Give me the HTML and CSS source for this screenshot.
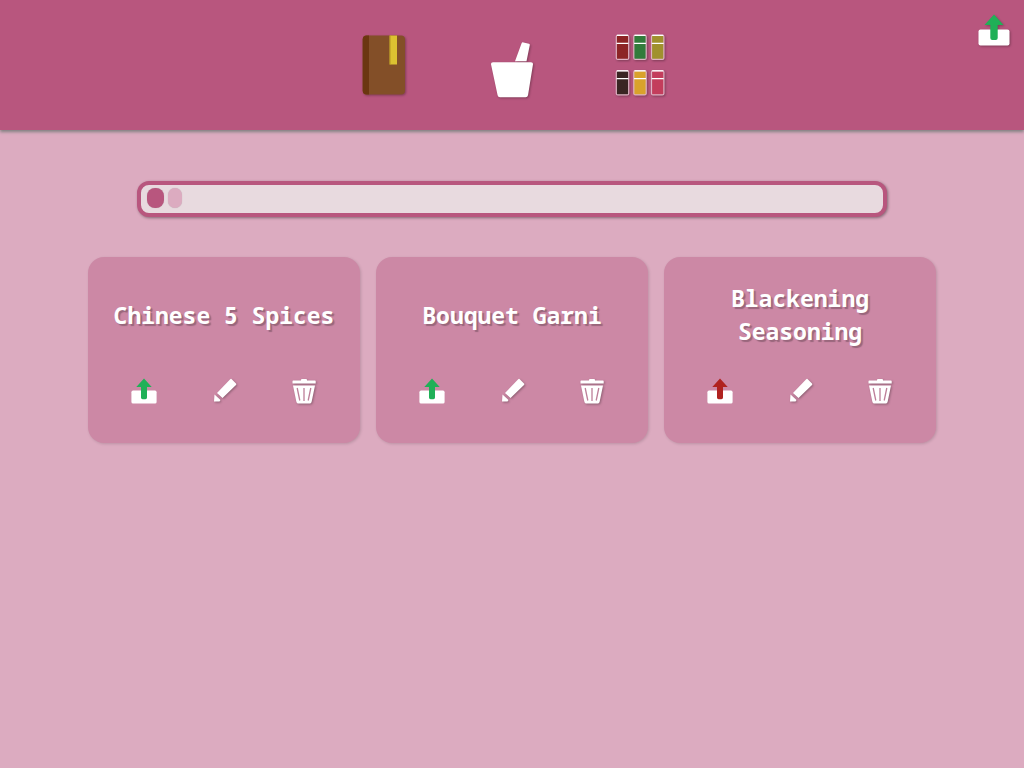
FILE: index.html
```html
<!DOCTYPE html>
<html lang="en">
<head>
<meta charset="utf-8">
<meta name="viewport" content="width=device-width, initial-scale=1">
<title>Spice Blends</title>
<link rel="stylesheet" href="styles.css">
</head>
<body>
<svg class="sprite" aria-hidden="true">
  <symbol id="tray" viewBox="0 0 32 32">
    <rect x="0.500" y="15.500" width="31" height="16" rx="2" fill="#fff"/>
    <path d="M16 0.500 25.500 11H19.700V24q0 2-2 2H14.300q-2 0-2-2V11H6.500Z" fill="currentColor"/>
  </symbol>
  <symbol id="pencil" viewBox="0 0 26 26">
    <path d="M20.500 1 25 5.500q.7.700 0 1.400L11.500 20 6 15 19.200 1.300q.6-.7 1.300-.3ZM3.500 16.500 9.500 22 8.500 23.500H3Z" fill="#fff"/>
  </symbol>
  <symbol id="trash" viewBox="0 0 26 26">
    <path d="M10 2.500V2q0-1 1-1h4q1 0 1 1v.500h8q.7 0 .7.700V5.500H1.500V3.200q0-.7.700-.7Z" fill="#fff"/>
    <path d="M2 7.500h22l-3.300 16Q20.300 25.500 19 25.500H7q-1.300 0-1.700-2Z" fill="#fff"/>
    <path d="M6.200 10 8.800 22.500M13 10v13M19.800 10l-2.600 12.500" stroke="#bd7f99" stroke-width="1.300" fill="none"/>
  </symbol>
</svg>
<header class="topbar">
  <nav class="nav" aria-label="Main">
    <a class="nav-link" href="#recipes" aria-label="Recipes">
      <svg class="nav-icon" viewBox="0 0 64 64">
        <rect x="10.700" y="3.500" width="42.300" height="59" rx="4" fill="#834f28"/>
        <path d="M17 3.500v59h-2.300q-4 0-4-4V7.500q0-4 4-4Z" fill="#6b3610"/>
        <rect x="37.600" y="3.500" width="7.400" height="29" fill="#dcc131"/>
        <path d="M38 3.500v29" stroke="#b39325"/>
      </svg>
    </a>
    <a class="nav-link" href="#mix" aria-label="Mix">
      <svg class="nav-icon" viewBox="0 0 64 64">
        <path d="M35 29.300 41.500 11.500Q42 10 43.500 10.400L49 11.700q1 .3.800 1.300L46.500 29.300Z" fill="#fff"/>
        <path d="M13 30.300h38q2.200 0 2 2L48 63.300q-.4 2-2.400 2H20q-2 0-2.400-2L11 32.300q-.2-2 2-2Z" fill="#fff"/>
      </svg>
    </a>
    <a class="nav-link" href="#spices" aria-label="Spices">
      <svg class="nav-icon" viewBox="0 0 64 64" stroke="#dfb3c4" stroke-width="1.200">
        <rect x="8.300" y="3.200" width="12.400" height="24.200" rx="1.500" fill="#8c2425"/>
        <rect x="25.800" y="3.200" width="12.400" height="24.200" rx="1.500" fill="#327b3b"/>
        <rect x="43.500" y="3.200" width="12.400" height="24.200" rx="1.500" fill="#a0912e"/>
        <rect x="8.300" y="38.700" width="12.400" height="24.200" rx="1.500" fill="#3a2523"/>
        <rect x="25.800" y="38.700" width="12.400" height="24.200" rx="1.500" fill="#d9a22b"/>
        <rect x="43.500" y="38.700" width="12.400" height="24.200" rx="1.500" fill="#c33d5c"/>
        <path stroke="#fff" d="M8.500 11.400h12M26 11.400h12M43.700 11.400h12M8.500 46.600h12M26 46.600h12M43.700 46.600h12M9 3.300h11M26.500 3.300h11M44.200 3.300h11M9 38.800h11M26.500 38.800h11M44.200 38.800h11"/>
      </svg>
    </a>
  </nav>
  <button class="icon-button share-all" type="button" aria-label="Share all"><svg class="share-icon"><use href="#tray"/></svg></button>
</header>
<main class="content">
  <form class="search" role="search">
    <button class="filter filter-on" type="button" aria-label="Filter by name"></button>
    <button class="filter" type="button" aria-label="Filter by spice"></button>
    <input class="search-input" type="text" aria-label="Search">
  </form>
  <section class="cards" aria-label="Blends">
    <article class="card">
      <h2 class="card-title">Chinese 5 Spices</h2>
      <div class="actions">
        <button class="icon-button shared" type="button" aria-label="Share"><svg class="icon"><use href="#tray"/></svg></button>
        <button class="icon-button" type="button" aria-label="Edit"><svg class="icon shadowed"><use href="#pencil"/></svg></button>
        <button class="icon-button" type="button" aria-label="Delete"><svg class="icon shadowed"><use href="#trash"/></svg></button>
      </div>
    </article>
    <article class="card">
      <h2 class="card-title">Bouquet Garni</h2>
      <div class="actions">
        <button class="icon-button shared" type="button" aria-label="Share"><svg class="icon"><use href="#tray"/></svg></button>
        <button class="icon-button" type="button" aria-label="Edit"><svg class="icon shadowed"><use href="#pencil"/></svg></button>
        <button class="icon-button" type="button" aria-label="Delete"><svg class="icon shadowed"><use href="#trash"/></svg></button>
      </div>
    </article>
    <article class="card">
      <h2 class="card-title">Blackening Seasoning</h2>
      <div class="actions">
        <button class="icon-button unshared" type="button" aria-label="Share"><svg class="icon"><use href="#tray"/></svg></button>
        <button class="icon-button" type="button" aria-label="Edit"><svg class="icon shadowed"><use href="#pencil"/></svg></button>
        <button class="icon-button" type="button" aria-label="Delete"><svg class="icon shadowed"><use href="#trash"/></svg></button>
      </div>
    </article>
  </section>
</main>
</body>
</html>
```
FILE: styles.css
```css
* {
  box-sizing: border-box;
}

body {
  margin: 0;
  min-height: 100vh;
  background: #dcabc0;
  color: #fff;
  font-family: "Noto Sans Mono", "DejaVu Sans Mono", monospace;
}

.sprite {
  display: none;
}

svg {
  display: block;
}

.topbar {
  position: relative;
  display: flex;
  justify-content: center;
  padding: 32px 16px 34px;
  background: #b8567e;
  box-shadow: 0 2px 3px gray;
}

.nav {
  display: flex;
  gap: 64px;
}

.nav-icon {
  width: 64px;
  height: 64px;
  overflow: visible;
  filter: drop-shadow(1px 1px 1px rgba(0, 0, 0, 0.3));
}

.icon-button {
  padding: 0;
  border: 0;
  background: none;
  color: #20b057;
  cursor: pointer;
}

.unshared {
  color: #b0221f;
}

.share-all {
  position: absolute;
  top: 14px;
  right: 14px;
}

.share-icon {
  width: 32px;
  height: 32px;
  filter: drop-shadow(1px 1px 1px rgba(0, 0, 0, 0.3));
}

.content {
  max-width: 880px;
  margin: 0 auto;
  padding: 51px 16px;
}

.search {
  display: flex;
  align-items: flex-start;
  gap: 4px;
  max-width: 750px;
  height: 36px;
  margin: 0 auto 40px;
  padding: 3px 6px;
  border: 4px solid #b8567e;
  border-radius: 12px;
  background: #e8dadf;
  box-shadow: 1px 1px 3px rgba(0, 0, 0, 0.4);
}

.filter {
  width: 14px;
  height: 20px;
  padding: 0;
  border: 0;
  border-radius: 7px;
  background: #dcabc0;
  box-shadow: 0 0 1px rgba(0, 0, 0, 0.2);
}

.filter-on {
  width: 17px;
  border-radius: 8px;
  background: #b8567e;
}

.search-input {
  flex: 1;
  min-width: 0;
  height: 20px;
  padding: 0;
  border: 0;
  outline: 0;
  background: none;
  font: inherit;
}

.cards {
  display: grid;
  grid-template-columns: repeat(auto-fill, minmax(256px, 1fr));
  gap: 16px;
}

.card {
  display: flex;
  flex-direction: column;
  padding: 25px 16px 39px;
  border-radius: 16px;
  background: #cc88a5;
  box-shadow: 1px 1px 3px rgba(0, 0, 0, 0.15);
}

.card-title {
  display: flex;
  flex: 1;
  align-items: center;
  justify-content: center;
  min-height: 66px;
  margin: 0 0 30px;
  font-size: 23px;
  line-height: 33px;
  text-align: center;
  text-shadow: 2px 2px 1px rgba(0, 0, 0, 0.25);
}

.actions {
  display: flex;
  justify-content: space-around;
}

.icon {
  width: 26px;
  height: 26px;
}

.shadowed {
  filter: drop-shadow(1px 1px 1px rgba(0, 0, 0, 0.3));
}
```
